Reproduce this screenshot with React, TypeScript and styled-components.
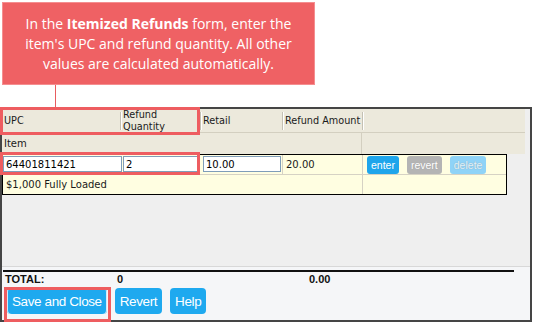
import React, { FunctionComponent } from 'react'
import styled, { createGlobalStyle } from 'styled-components'

const GlobalStyle = createGlobalStyle`
  html, body {
    margin: 0;
    padding: 0;
    background: #ffffff;
  }
  * {
    box-sizing: border-box;
  }
`

const StyledPage = styled.div`
  position: relative;
  width: 533px;
  height: 323px;
  overflow: hidden;
  font-family: 'DejaVu Sans', Verdana, sans-serif;
  font-size: 10px;
  color: #1a1a1a;
`

const StyledCallout = styled.div`
  margin: 2px 0 0 2px;
  width: 313px;
  height: 83px;
  background: #ef6164;
  border: 1px solid #f58e90;
  color: #ffffff;
  font-family: 'Open Sans', 'Noto Sans', sans-serif;
  font-size: 14px;
  line-height: 20px;
  text-align: center;
  display: flex;
  flex-direction: column;
  align-items: center;
  justify-content: center;
  b {
    font-weight: 700;
  }
`

const StyledConnector = styled.div`
  width: 1px;
  height: 22px;
  margin-left: 55px;
  background: #e85c5f;
`

const StyledFrame = styled.div`
  width: 532px;
  height: 215px;
  border: 2px solid #454545;
  background: #efefef;
  display: flex;
  flex-direction: column;
`

const StyledScroll = styled.div`
  flex: 1;
  width: 523px;
`

const StyledHeadRow = styled.div`
  display: grid;
  grid-template-columns: 118px 80px 82px 80px 1fr;
  height: 24px;
  background: #ece9dc;
  border-bottom: 1px solid #d3cfc0;
`

const StyledHeadCell = styled.div<{ sep?: boolean }>`
  position: relative;
  display: flex;
  align-items: center;
  padding-left: ${(p) => (p.sep ? '3px' : '2px')};
  font-size: 9.7px;
  line-height: 12px;
  white-space: nowrap;
  &:before {
    content: '';
    display: ${(p) => (p.sep ? 'block' : 'none')};
    position: absolute;
    left: 0;
    top: 3px;
    bottom: 3px;
    width: 1px;
    background: #c4c1b4;
    box-shadow: 1px 0 0 #ffffff;
  }
`

const StyledItemRow = styled.div`
  display: grid;
  grid-template-columns: 360px 1fr;
  height: 21px;
  background: #ece9dc;
  div {
    display: flex;
    align-items: center;
    padding-left: 2px;
  }
  div:first-child {
    border-right: 1px solid #d3cfc0;
  }
`

const StyledTable = styled.div`
  width: 505px;
  background: #fffee1;
  border: 1px solid #000000;
`

const StyledRow = styled.div<{ last?: boolean }>`
  display: flex;
  height: ${(p) => (p.last ? '19px' : '20px')};
  border-bottom: ${(p) => (p.last ? 'none' : '1px solid #d6d2c4')};
`

const StyledCell = styled.div<{ w?: number; line?: boolean }>`
  width: ${(p) => (p.w ? `${p.w}px` : 'auto')};
  flex: ${(p) => (p.w ? 'none' : '1')};
  display: flex;
  align-items: flex-start;
  padding-top: 1px;
  border-right: ${(p) => (p.line ? '1px solid #d6d2c4' : 'none')};
  &.text {
    align-items: center;
    padding: 0 0 1px 3px;
  }
  &.actions {
    gap: 8px;
    padding-left: 4px;
  }
`

const StyledInput = styled.input<{ w: number }>`
  width: ${(p) => p.w}px;
  height: 16px;
  margin: 0;
  padding: 0 0 0 2px;
  border: 1px solid #7f9db9;
  background: #ffffff;
  font-family: 'DejaVu Sans', Verdana, sans-serif;
  font-size: 10px;
  color: #000000;
  outline: none;
`

const StyledSmallButton = styled.button<{ kind: 'enter' | 'revert' | 'delete' }>`
  height: 18px;
  padding: 0 4px;
  border: none;
  border-radius: 3px;
  font-family: 'Liberation Sans', Arial, sans-serif;
  font-size: 10.5px;
  background: ${(p) =>
    p.kind === 'enter' ? '#1fa5eb' : p.kind === 'revert' ? '#b4b4b4' : '#8fd3f7'};
  color: ${(p) => (p.kind === 'delete' ? '#e2f3fb' : '#ffffff')};
  text-shadow: ${(p) =>
    p.kind === 'delete' ? '0 0 1px #8a9aa4' : p.kind === 'revert' ? '0 0 1px #999' : 'none'};
`

const StyledFooter = styled.div`
  height: 54px;
  border-top: 1px solid #d8d8d8;
  background: #f5f6f8;
  padding: 3px 0 0 1px;
`

const StyledTotals = styled.div`
  width: 511px;
  display: grid;
  grid-template-columns: 112px 192px 1fr;
  height: 16px;
  border-top: 2px solid #111111;
  font-family: 'Liberation Sans', Arial, sans-serif;
  font-size: 11px;
  font-weight: 700;
  color: #111111;
  span {
    padding-left: 2px;
    line-height: 14px;
  }
`

const StyledButtonBar = styled.div`
  display: flex;
  gap: 8px;
  margin-top: 2px;
  padding-left: 4px;
`

const StyledButton = styled.button<{ focused?: boolean }>`
  height: 26px;
  padding: 0 5px;
  border: none;
  border-radius: 4px;
  background: #1ea9ef;
  color: #ffffff;
  font-family: 'Liberation Sans', Arial, sans-serif;
  font-size: 13.5px;
  letter-spacing: -0.4px;
  box-shadow: ${(p) => (p.focused ? 'inset 1px 0 0 #cdeafb, inset -1px 0 0 #cdeafb' : 'none')};
`

const StyledHighlight = styled.div<{ x: number; y: number; w: number; h: number }>`
  position: absolute;
  left: ${(p) => p.x}px;
  top: ${(p) => p.y}px;
  width: ${(p) => p.w}px;
  height: ${(p) => p.h}px;
  border: 3px solid #ee5d60;
  pointer-events: none;
`

const App: FunctionComponent = () => {
  return (
    <StyledPage>
      <GlobalStyle />
      <StyledCallout>
        <div>
          In the <b>Itemized Refunds</b> form, enter the
        </div>
        <div>item's UPC and refund quantity. All other</div>
        <div>values are calculated automatically.</div>
      </StyledCallout>
      <StyledConnector />
      <StyledFrame>
        <StyledScroll>
          <StyledHeadRow>
            <StyledHeadCell>UPC</StyledHeadCell>
            <StyledHeadCell sep>
              Refund
              <br />
              Quantity
            </StyledHeadCell>
            <StyledHeadCell sep>Retail</StyledHeadCell>
            <StyledHeadCell sep>Refund Amount</StyledHeadCell>
            <StyledHeadCell sep />
          </StyledHeadRow>
          <StyledItemRow>
            <div>Item</div>
            <div />
          </StyledItemRow>
          <StyledTable>
            <StyledRow>
              <StyledCell w={120}>
                <StyledInput w={119} defaultValue="64401811421" />
              </StyledCell>
              <StyledCell w={80}>
                <StyledInput w={77} defaultValue="2" />
              </StyledCell>
              <StyledCell w={80} line>
                <StyledInput w={78} defaultValue="10.00" />
              </StyledCell>
              <StyledCell w={80} line className="text">
                20.00
              </StyledCell>
              <StyledCell className="actions">
                <StyledSmallButton kind="enter">enter</StyledSmallButton>
                <StyledSmallButton kind="revert">revert</StyledSmallButton>
                <StyledSmallButton kind="delete">delete</StyledSmallButton>
              </StyledCell>
            </StyledRow>
            <StyledRow last>
              <StyledCell w={360} line className="text">
                $1,000 Fully Loaded
              </StyledCell>
              <StyledCell />
            </StyledRow>
          </StyledTable>
        </StyledScroll>
        <StyledFooter>
          <StyledTotals>
            <span>TOTAL:</span>
            <span>0</span>
            <span>0.00</span>
          </StyledTotals>
          <StyledButtonBar>
            <StyledButton focused>Save and Close</StyledButton>
            <StyledButton>Revert</StyledButton>
            <StyledButton>Help</StyledButton>
          </StyledButtonBar>
        </StyledFooter>
      </StyledFrame>
      <StyledHighlight x={0} y={107} w={200} h={28} />
      <StyledHighlight x={0} y={152} w={200} h={23} />
      <StyledHighlight x={4} y={287} w={107} h={35} />
    </StyledPage>
  )
}

export default App
